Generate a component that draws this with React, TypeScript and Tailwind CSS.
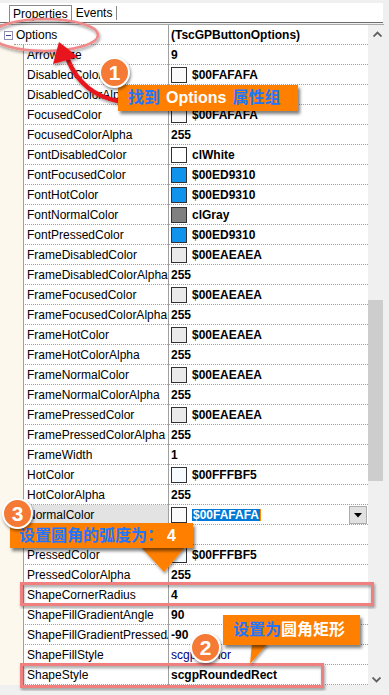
import React from "react";

type Row = { n: string; v: string; c?: string; blue?: boolean; sel?: boolean };

const rows: Row[] = [
  { n: "ArrowSize", v: "9" },
  { n: "DisabledColor", v: "$00FAFAFA", c: "#fafafa" },
  { n: "DisabledColorAlpha", v: "255" },
  { n: "FocusedColor", v: "$00FAFAFA", c: "#fafafa" },
  { n: "FocusedColorAlpha", v: "255" },
  { n: "FontDisabledColor", v: "clWhite", c: "#ffffff" },
  { n: "FontFocusedColor", v: "$00ED9310", c: "#1093ed" },
  { n: "FontHotColor", v: "$00ED9310", c: "#1093ed" },
  { n: "FontNormalColor", v: "clGray", c: "#808080" },
  { n: "FontPressedColor", v: "$00ED9310", c: "#1093ed" },
  { n: "FrameDisabledColor", v: "$00EAEAEA", c: "#eaeaea" },
  { n: "FrameDisabledColorAlpha", v: "255" },
  { n: "FrameFocusedColor", v: "$00EAEAEA", c: "#eaeaea" },
  { n: "FrameFocusedColorAlpha", v: "255" },
  { n: "FrameHotColor", v: "$00EAEAEA", c: "#eaeaea" },
  { n: "FrameHotColorAlpha", v: "255" },
  { n: "FrameNormalColor", v: "$00EAEAEA", c: "#eaeaea" },
  { n: "FrameNormalColorAlpha", v: "255" },
  { n: "FramePressedColor", v: "$00EAEAEA", c: "#eaeaea" },
  { n: "FramePressedColorAlpha", v: "255" },
  { n: "FrameWidth", v: "1" },
  { n: "HotColor", v: "$00FFFBF5", c: "#f5fbff" },
  { n: "HotColorAlpha", v: "255" },
  { n: "NormalColor", v: "$00FAFAFA", c: "#fafafa", sel: true },
  { n: "NormalColorAlpha", v: "255" },
  { n: "PressedColor", v: "$00FFFBF5", c: "#f5fbff" },
  { n: "PressedColorAlpha", v: "255" },
  { n: "ShapeCornerRadius", v: "4" },
  { n: "ShapeFillGradientAngle", v: "90" },
  { n: "ShapeFillGradientPressedAngle", v: "-90" },
  { n: "ShapeFillStyle", v: "scgpsColor", blue: true },
  { n: "ShapeStyle", v: "scgpRoundedRect" },
];

function GridRow({ r }: { r: Row }) {
  return (
    <div className="flex h-[20px]">
      <div className="w-[23px] shrink-0 bg-[#fcf8ee]" />
      <div
        className={`w-[145px] shrink-0 border-l border-[#a0a0a0] border-b border-b-[#a0a0a0] border-dotted pl-[3px] flex items-center overflow-hidden whitespace-nowrap ${
          r.sel ? "bg-[#e3e3e3]" : "bg-white"
        }`}
        style={{ borderLeftStyle: "solid" }}
      >
        {r.n}
      </div>
      <div
        className="flex-1 border-l border-[#a0a0a0] border-b border-b-[#a0a0a0] border-dotted pl-[2px] flex items-center whitespace-nowrap relative"
        style={{ borderLeftStyle: "solid" }}
      >
        {r.c && (
          <span
            className="w-[16px] h-[16px] border border-[#303030] mr-[5px] shrink-0"
            style={{ backgroundColor: r.c }}
          />
        )}
        {r.sel ? (
          <>
            <span className="bg-[#0078d7] text-white font-bold px-[1px] border-r border-r-[#ff8c00] border-solid">
              {r.v}
            </span>
            <span className="absolute right-[1px] top-[1px] w-[18px] h-[18px] bg-[#e1e1e1] border border-solid border-[#adadad] flex items-center justify-center">
              <svg width="8" height="5" viewBox="0 0 8 5">
                <path d="M0 0 H8 L4 4.5 Z" fill="#000" />
              </svg>
            </span>
          </>
        ) : (
          <span className={r.blue ? "text-[#000080]" : "font-bold"}>{r.v}</span>
        )}
      </div>
    </div>
  );
}

function Circle({ n, cls }: { n: string; cls: string }) {
  return (
    <div
      className={`absolute w-[31px] h-[31px] rounded-full bg-[#f47a36] border-2 border-white shadow-[1px_2px_3px_rgba(0,0,0,0.45)] flex items-center justify-center text-white font-bold text-[21px] font-['Liberation_Sans',sans-serif] ${cls}`}
    >
      {n}
    </div>
  );
}

export default function App() {
  const cjk = "font-['Liberation_Sans','Noto_Sans_CJK_SC',sans-serif]";
  return (
    <div className="relative w-[389px] h-[695px] overflow-hidden bg-[#f0f0f0] text-[12px] text-black font-['Liberation_Sans',sans-serif] leading-none">
      {/* tab strip */}
      <div className="h-[25px] pt-[3px] flex flex-col">
        <div className="h-[19px] w-[383px] bg-white flex items-end pl-[9px]">
          <div className="h-[17px] px-[3px] border border-b-0 border-[#8a8a8a] flex items-center bg-white">
            Properties
          </div>
          <div className="h-[14px] px-[4px] border-r border-[#8a8a8a] flex items-center mb-[2px]">
            Events
          </div>
        </div>
        <div className="h-[1px] w-[383px] bg-[#6e6e6e]" />
        <div className="h-[1px] w-[384px] bg-[#f0f0f0]" />
        <div className="h-[1px] w-[384px] bg-[#a8a8a8]" />
      </div>

      {/* grid + scrollbar */}
      <div className="flex h-[670px]">
        <div className="w-[368px] flex flex-col">
          <div className="bg-white">
            <div className="flex h-[20px]">
              <div className="w-[14px] shrink-0 flex items-center justify-center pl-[2px]">
                <div className="w-[9px] h-[9px] border border-[#8f8fb0] bg-white flex items-center justify-center">
                  <div className="w-[5px] h-[1px] bg-[#3c3c8c]" />
                </div>
              </div>
              <div className="w-[154px] shrink-0 border-b border-dotted border-[#a0a0a0] pl-[2px] flex items-center">
                Options
              </div>
              <div
                className="flex-1 border-l border-[#a0a0a0] border-b border-b-[#a0a0a0] border-dotted pl-[2px] flex items-center font-bold"
                style={{ borderLeftStyle: "solid" }}
              >
                (TscGPButtonOptions)
              </div>
            </div>
            {rows.map((r) => (
              <GridRow key={r.n} r={r} />
            ))}
          </div>
        </div>
        <div className="w-[21px] relative">
          <div className="absolute left-[5px] top-[6px]">
            <svg width="9" height="6" viewBox="0 0 9 6">
              <path d="M0.5 5.5 L4.5 1.5 L8.5 5.5" stroke="#606060" strokeWidth="1.8" fill="none" />
            </svg>
          </div>
          <div className="absolute left-0 top-[275px] w-[15px] h-[181px] bg-[#cdcdcd]" />
          <div className="absolute left-[4px] top-[652px]">
            <svg width="9" height="6" viewBox="0 0 9 6">
              <path d="M0.5 0.5 L4.5 4.5 L8.5 0.5" stroke="#606060" strokeWidth="1.8" fill="none" />
            </svg>
          </div>
        </div>
      </div>

      {/* annotations */}
      <svg className="absolute inset-0 pointer-events-none" width="389" height="695">
        <defs>
          <filter id="sh" x="-20%" y="-20%" width="140%" height="140%">
            <feDropShadow dx="1" dy="2" stdDeviation="1.5" floodColor="#000" floodOpacity="0.4" />
          </filter>
        </defs>
        <ellipse cx="45" cy="35" rx="53" ry="16" fill="none" stroke="#f08a8a" strokeWidth="2.5" filter="url(#sh)" />
        {/* red arrow */}
        <path d="M118 101 Q82 94 68 60" fill="none" stroke="#e8141c" strokeWidth="4.5" strokeLinecap="round" filter="url(#sh)" />
        <path d="M59 42 L53 64 L78 57 Z" fill="#e8141c" filter="url(#sh)" />
        {/* pink rects */}
        <rect x="21.5" y="583.5" width="351" height="21" fill="none" stroke="#f08080" strokeWidth="3" filter="url(#sh)" />
        <rect x="21.5" y="664.5" width="301" height="22" fill="none" stroke="#f08080" strokeWidth="3" filter="url(#sh)" />
        {/* callout tails */}
        <path d="M140 546 L186 546 L164 572 Z" fill="#ff8000" filter="url(#sh)" />
        <path d="M252 643 L268 643 L250 664 Z" fill="#ff8000" filter="url(#sh)" />
      </svg>

      {/* callout 1 */}
      <div
        className={`absolute left-[118px] top-[85px] w-[180px] h-[26px] bg-[#ff8000] shadow-[2px_3px_3px_rgba(0,0,0,0.5)] flex items-center pl-[10px] text-[16px] font-bold whitespace-nowrap ${cjk}`}
      >
        <span className="text-[#2176ff]">找到</span>
        <span className="text-white ml-[6px]">Options</span>
        <span className="text-[#2176ff] ml-[6px]">属性组</span>
      </div>

      {/* callout 3 */}
      <div
        className={`absolute left-[10px] top-[523px] w-[183px] h-[25px] bg-[#ff8000] shadow-[2px_3px_3px_rgba(0,0,0,0.5)] flex items-center pl-[9px] text-[16px] font-bold whitespace-nowrap ${cjk}`}
      >
        <span className="text-[#2176ff]">设置圆角的弧度为：</span>
        <span className="text-white ml-[4px]">4</span>
      </div>

      {/* callout 2 */}
      <div
        className={`absolute left-[223px] top-[615px] w-[137px] h-[30px] bg-[#ff8000] shadow-[2px_3px_3px_rgba(0,0,0,0.5)] flex items-center pl-[10px] text-[16px] font-bold whitespace-nowrap ${cjk}`}
      >
        <span className="text-[#2176ff]">设置为</span>
        <span className="text-white">圆角矩形</span>
      </div>

      <Circle n="1" cls="left-[99px] top-[57px]" />
      <Circle n="3" cls="left-[2px] top-[498px]" />
      <Circle n="2" cls="left-[190px] top-[632px]" />
    </div>
  );
}
